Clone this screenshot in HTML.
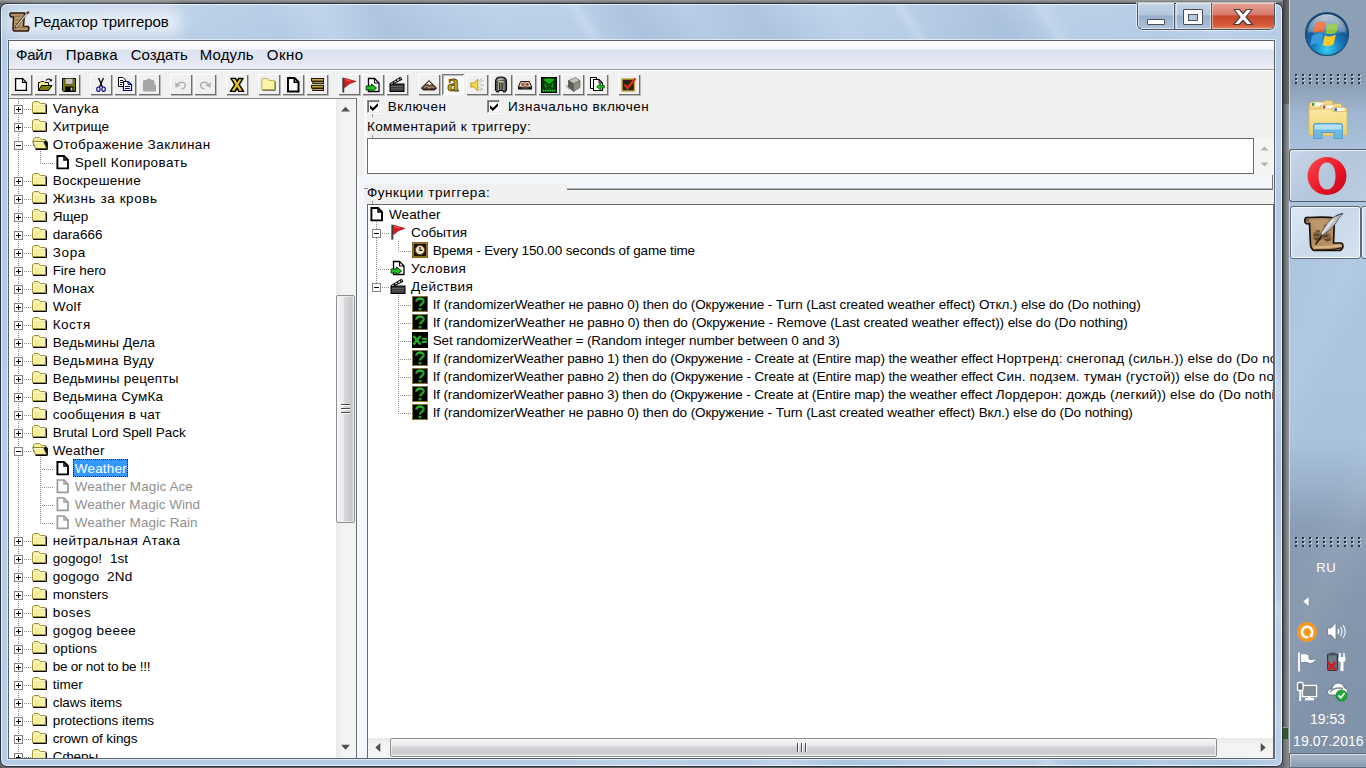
<!DOCTYPE html>
<html><head><meta charset="utf-8"><title>Редактор триггеров</title>
<style>
html,body{margin:0;padding:0}
body{width:1366px;height:768px;overflow:hidden;position:relative;background:#606468;font-family:"Liberation Sans",sans-serif}
div{box-sizing:border-box}
.a,.t,.ic,.hd,.vd,.box,.sel,.tb{position:absolute}
.t{white-space:pre;line-height:16px;height:16px}
.ic{line-height:0}
.ic svg,.tb svg{display:block}
.hd{height:1px;background:repeating-linear-gradient(90deg,#8c8c8c 0 1px,transparent 1px 2px)}
.vd{width:1px;background:repeating-linear-gradient(180deg,#8c8c8c 0 1px,transparent 1px 2px)}
.box{width:9px;height:9px;border:1px solid #848484;background:#fff}
.box:before{content:"";position:absolute;left:1px;top:3px;width:5px;height:1px;background:#000}
.box.plus:after{content:"";position:absolute;left:3px;top:1px;width:1px;height:5px;background:#000}
.sel{background:#3399ff;outline:1px dotted #1a1a1a;outline-offset:-1px}
.tb{top:74px;width:22px;height:21px;background:#f0f0f0;box-shadow:inset 1px 1px 0 #fff,inset -1px -1px 0 #6e6e6e,1px 1px 0 #b9b9b9}
.tb.dn{background:#f8f8f8;box-shadow:inset 1px 1px 0 #7e7e7e,inset -1px -1px 0 #fff,inset 2px 2px 0 #b8b8b8}
.tb svg{position:absolute;left:3px;top:2px}
</style></head>
<body>
<!-- top strip above window -->
<div class="a" style="left:0;top:0;width:1290px;height:4px;background:linear-gradient(#9a9da0,#5a5d60)"></div>
<!-- strip right of window (other windows behind) -->
<div class="a" style="left:1283px;top:0;width:7px;height:768px;background:linear-gradient(90deg,#46484c,#77797d 40%,#8a8c90 75%,#c8d4e2)"></div>
<div class="a" style="left:1283px;top:0;width:6px;height:104px;background:linear-gradient(90deg,#3c3e42,#5c5e62 50%,#66686c)"></div>

<div class="a" style="left:1283px;top:727px;width:5px;height:12px;background:#2c5a2c;border-top:1px solid #9a9a9a"></div>
<div class="a" style="left:1283px;top:739px;width:6px;height:29px;background:linear-gradient(90deg,#6a6a6a,#8e8e8e)"></div>
<!-- ================= TASKBAR ================= -->
<div id="taskbar" class="a" style="left:1289px;top:0;width:77px;height:768px;background:linear-gradient(115deg,rgba(255,255,255,0) 30%,rgba(255,255,255,.07) 42%,rgba(255,255,255,0) 50%,rgba(255,255,255,0) 62%,rgba(255,255,255,.06) 70%,rgba(255,255,255,0) 80%),linear-gradient(180deg,#8ea0b5 0,#8b9eb4 84px,#a0b6cf 112px,#a9c1db 150px,#adc6e0 260px,#a9c3de 440px,#9db3cc 480px,#8a9db4 525px,#8597ad 600px,#7f91a7 768px);border-left:1px solid #c9d6e4">
</div>

<!-- ================= WINDOW FRAME ================= -->
<div id="win" class="a" style="left:0;top:3px;width:1283px;height:764px;border-radius:7px;border:1px solid #27313e;background:linear-gradient(58deg,rgba(255,255,255,0) 0.0%,rgba(255,255,255,0) 30.0%,rgba(255,255,255,0.1) 36.0%,rgba(255,255,255,0) 42.0%,rgba(255,255,255,0.13) 44.7%,rgba(255,255,255,0) 46.5%,rgba(40,70,110,0.06) 48.1%,rgba(255,255,255,0) 52.0%,rgba(255,255,255,0.08) 54.9%,rgba(255,255,255,0.06) 59.0%,rgba(255,255,255,0.2) 59.7%,rgba(255,255,255,0) 60.3%,rgba(40,70,110,0.07) 62.5%,rgba(255,255,255,0) 66.0%,rgba(40,70,110,0.06) 69.7%,rgba(255,255,255,0) 72.0%,rgba(255,255,255,0.1) 74.2%,rgba(255,255,255,0.04) 77.6%,rgba(255,255,255,0.2) 78.2%,rgba(255,255,255,0) 78.8%,rgba(40,70,110,0.08) 83.3%,rgba(255,255,255,0) 85.5%,rgba(255,255,255,0.18) 86.1%,rgba(255,255,255,0.05) 87.0%,rgba(255,255,255,0) 92.0%,rgba(255,255,255,0.1) 95.0%,rgba(255,255,255,0) 100.0%),linear-gradient(180deg,#b9cfe7 0,#b3cae4 40px,#b6cce5 100%);box-shadow:inset 0 0 0 1px rgba(255,255,255,.75)"></div>
<!-- title glow -->
<div class="a" style="left:6px;top:9px;width:176px;height:26px;border-radius:13px;background:rgba(255,255,255,.62);filter:blur(7px)"></div>

<!-- client border -->
<div class="a" style="left:7px;top:39px;width:1269px;height:721px;border:1px solid rgba(255,255,255,.55)"></div>
<div id="client" class="a" style="left:8px;top:40px;width:1267px;height:719px;border:1px solid #586270;background:#f0f0f0"></div>

<!-- menu bar -->
<div class="a" style="left:9px;top:41px;width:1265px;height:28px;background:linear-gradient(180deg,#ffffff 0,#f7f8fc 8px,#dde2f0 9px,#dfe4f1 16px,#eceef7 28px)"></div>
<div class="a" style="left:9px;top:69px;width:1265px;height:1px;background:#a0a0a0"></div>
<div class="a" style="left:9px;top:70px;width:1265px;height:1px;background:#fff"></div>
<!-- toolbar bg is client bg (#f0f0f0) -->

<!-- ===== left tree box ===== -->
<div class="a" style="left:9px;top:98px;width:348px;height:660px;background:#fff;border-top:1px solid #828282;border-right:1px solid #6e6e6e"></div>
<!-- vertical splitter -->
<div class="a" style="left:357px;top:98px;width:10px;height:660px;background:#f4f7fb"></div>
<div class="a" style="left:357px;top:98px;width:7px;height:78px;background:#f0f0f0"></div>

<!-- ===== right pane ===== -->
<!-- checkboxes -->
<div class="a cb" style="left:367px;top:100px"></div>
<div class="a cb" style="left:487px;top:100px"></div>
<style>
.cb{width:13px;height:13px;background:#fff;border:1px solid #8a8a8a;border-right-color:#e8e8e8;border-bottom-color:#e8e8e8;box-shadow:inset 1px 1px 0 #6e6e6e,1px 1px 0 #fff}
.cb:after{content:"";position:absolute;left:2px;top:2px;width:8px;height:8px;background:#000;clip-path:polygon(0 28%,0 68%,36% 100%,100% 38%,100% 0%,36% 62%)}
</style>
<!-- tiny tick artefacts -->
<div class="a" style="left:372px;top:114px;width:1px;height:3px;background:#9a9a9a"></div>
<div class="a" style="left:372px;top:135px;width:1px;height:3px;background:#9a9a9a"></div>
<!-- comment box -->
<div class="a" style="left:367px;top:138px;width:887px;height:36px;background:#fff;border:1px solid #6c6c6c"></div>
<div class="a" style="left:1254px;top:138px;width:20px;height:36px;background:#f4f4f4"></div>
<svg class="a" style="left:1259px;top:144px" width="11" height="26" viewBox="0 0 11 26"><path d="M1.5 6.5L5.5 2.5L9.5 6.5Z" fill="#b4b4b4"/><path d="M1.5 18.5L5.5 22.5L9.5 18.5Z" fill="#b4b4b4"/></svg>
<!-- horizontal splitter strip -->
<div class="a" style="left:364px;top:175px;width:909px;height:15px;background:#f3f6fb;border-bottom:1px solid #666;border-right:1px solid #777"></div>
<div class="a" style="left:364px;top:190px;width:909px;height:1px;background:#fbfbfb"></div>
<div class="a" style="left:364px;top:188px;width:908px;height:1px;background:#b4b6ba"></div>
<!-- label bg -->
<div class="a" style="left:364px;top:184px;width:203px;height:20px;background:#f0f0f0"></div>
<div class="a" style="left:364px;top:188px;width:4px;height:1px;background:#8a8a8a"></div>
<div class="a" style="left:372px;top:201px;width:1px;height:3px;background:#9a9a9a"></div>
<!-- function tree box -->
<div class="a" style="left:367px;top:204px;width:907px;height:554px;background:#fff;border-top:1px solid #6a6a6a;border-left:1px solid #6a6a6a;border-right:1px solid #6a6a6a"></div>

<div id="tree" class="a" style="left:0;top:99px;width:336px;height:659px;overflow:hidden"><div class="a" style="left:0;top:-99px">
<div class="vd" style="left:18px;top:99px;height:660px"></div>
<div class="vd" style="left:40px;top:151px;height:13px"></div>
<div class="vd" style="left:40px;top:457px;height:67px"></div>
<div class="hd" style="left:24px;top:109px;width:8px"></div>
<div class="box plus" style="left:14px;top:105px"></div>
<div class="ic" style="left:32px;top:100px"><svg width="16" height="15" viewBox="0 0 16 15" ><path d="M0.5 12.5V3L2 1.5H6.5L8.5 3.5H13.5V12.5Z" fill="#f4ec96" stroke="#9a9440"/><path d="M1.5 4.5H12.5M1.5 4.5V11.5" stroke="#fffbd2" fill="none"/><path d="M7 8l5 -3v7h-6z" fill="#fbf6c0" opacity=".6"/><path d="M1 13.5H14.5V4.5" fill="none" stroke="#000"/><path d="M14.5 5V13" stroke="#000"/></svg></div>
<div class="t" style="left:52.7px;top:101px;font-size:13.5px;letter-spacing:0.395px;color:#000;">Vanyka</div>
<div class="hd" style="left:24px;top:127px;width:8px"></div>
<div class="box plus" style="left:14px;top:123px"></div>
<div class="ic" style="left:32px;top:118px"><svg width="16" height="15" viewBox="0 0 16 15" ><path d="M0.5 12.5V3L2 1.5H6.5L8.5 3.5H13.5V12.5Z" fill="#f4ec96" stroke="#9a9440"/><path d="M1.5 4.5H12.5M1.5 4.5V11.5" stroke="#fffbd2" fill="none"/><path d="M7 8l5 -3v7h-6z" fill="#fbf6c0" opacity=".6"/><path d="M1 13.5H14.5V4.5" fill="none" stroke="#000"/><path d="M14.5 5V13" stroke="#000"/></svg></div>
<div class="t" style="left:52.7px;top:119px;font-size:13.5px;letter-spacing:0.021px;color:#000;">Хитрище</div>
<div class="hd" style="left:24px;top:145px;width:8px"></div>
<div class="box minus" style="left:14px;top:141px"></div>
<div class="ic" style="left:32px;top:136px"><svg width="17" height="15" viewBox="0 0 17 15" ><path d="M1.5 10V3L3 1.5H7.5L9.5 3.5H13.5V6" fill="#f4ec96" stroke="#9a9440"/><path d="M0.5 5.5H11.5L14.5 12.5H3.5Z" fill="#f6ef9e" stroke="#8a8436"/><path d="M1.8 6.5H11" stroke="#fffbd2"/><path d="M12 5.5L15.5 13V6.5L14 4.5" fill="#000" stroke="#000" stroke-width=".8"/><path d="M3.5 13.3H15.5" stroke="#000" stroke-width="1.4"/></svg></div>
<div class="t" style="left:52.7px;top:137px;font-size:13.5px;letter-spacing:0.443px;color:#000;">Отображение Заклинан</div>
<div class="hd" style="left:42px;top:163px;width:12px"></div>
<div class="ic" style="left:56px;top:155px"><svg width="14" height="16" viewBox="0 0 14 16" ><path d="M1.4 1H8L12 5V13.4H1.4Z" fill="#fff" stroke="#000" stroke-width="1.9" stroke-linejoin="miter"/><path d="M8 1V5H12" fill="none" stroke="#000" stroke-width="1.5"/></svg></div>
<div class="t" style="left:74.7px;top:155px;font-size:13.5px;letter-spacing:0.402px;color:#000;">Spell Копировать</div>
<div class="hd" style="left:24px;top:181px;width:8px"></div>
<div class="box plus" style="left:14px;top:177px"></div>
<div class="ic" style="left:32px;top:172px"><svg width="16" height="15" viewBox="0 0 16 15" ><path d="M0.5 12.5V3L2 1.5H6.5L8.5 3.5H13.5V12.5Z" fill="#f4ec96" stroke="#9a9440"/><path d="M1.5 4.5H12.5M1.5 4.5V11.5" stroke="#fffbd2" fill="none"/><path d="M7 8l5 -3v7h-6z" fill="#fbf6c0" opacity=".6"/><path d="M1 13.5H14.5V4.5" fill="none" stroke="#000"/><path d="M14.5 5V13" stroke="#000"/></svg></div>
<div class="t" style="left:52.7px;top:173px;font-size:13.5px;letter-spacing:0.297px;color:#000;">Воскрешение</div>
<div class="hd" style="left:24px;top:199px;width:8px"></div>
<div class="box plus" style="left:14px;top:195px"></div>
<div class="ic" style="left:32px;top:190px"><svg width="16" height="15" viewBox="0 0 16 15" ><path d="M0.5 12.5V3L2 1.5H6.5L8.5 3.5H13.5V12.5Z" fill="#f4ec96" stroke="#9a9440"/><path d="M1.5 4.5H12.5M1.5 4.5V11.5" stroke="#fffbd2" fill="none"/><path d="M7 8l5 -3v7h-6z" fill="#fbf6c0" opacity=".6"/><path d="M1 13.5H14.5V4.5" fill="none" stroke="#000"/><path d="M14.5 5V13" stroke="#000"/></svg></div>
<div class="t" style="left:52.7px;top:191px;font-size:13.5px;letter-spacing:0.563px;color:#000;">Жизнь за кровь</div>
<div class="hd" style="left:24px;top:217px;width:8px"></div>
<div class="box plus" style="left:14px;top:213px"></div>
<div class="ic" style="left:32px;top:208px"><svg width="16" height="15" viewBox="0 0 16 15" ><path d="M0.5 12.5V3L2 1.5H6.5L8.5 3.5H13.5V12.5Z" fill="#f4ec96" stroke="#9a9440"/><path d="M1.5 4.5H12.5M1.5 4.5V11.5" stroke="#fffbd2" fill="none"/><path d="M7 8l5 -3v7h-6z" fill="#fbf6c0" opacity=".6"/><path d="M1 13.5H14.5V4.5" fill="none" stroke="#000"/><path d="M14.5 5V13" stroke="#000"/></svg></div>
<div class="t" style="left:52.7px;top:209px;font-size:13.5px;letter-spacing:-0.059px;color:#000;">Ящер</div>
<div class="hd" style="left:24px;top:235px;width:8px"></div>
<div class="box plus" style="left:14px;top:231px"></div>
<div class="ic" style="left:32px;top:226px"><svg width="16" height="15" viewBox="0 0 16 15" ><path d="M0.5 12.5V3L2 1.5H6.5L8.5 3.5H13.5V12.5Z" fill="#f4ec96" stroke="#9a9440"/><path d="M1.5 4.5H12.5M1.5 4.5V11.5" stroke="#fffbd2" fill="none"/><path d="M7 8l5 -3v7h-6z" fill="#fbf6c0" opacity=".6"/><path d="M1 13.5H14.5V4.5" fill="none" stroke="#000"/><path d="M14.5 5V13" stroke="#000"/></svg></div>
<div class="t" style="left:52.7px;top:227px;font-size:13.5px;letter-spacing:0.050px;color:#000;">dara666</div>
<div class="hd" style="left:24px;top:253px;width:8px"></div>
<div class="box plus" style="left:14px;top:249px"></div>
<div class="ic" style="left:32px;top:244px"><svg width="16" height="15" viewBox="0 0 16 15" ><path d="M0.5 12.5V3L2 1.5H6.5L8.5 3.5H13.5V12.5Z" fill="#f4ec96" stroke="#9a9440"/><path d="M1.5 4.5H12.5M1.5 4.5V11.5" stroke="#fffbd2" fill="none"/><path d="M7 8l5 -3v7h-6z" fill="#fbf6c0" opacity=".6"/><path d="M1 13.5H14.5V4.5" fill="none" stroke="#000"/><path d="M14.5 5V13" stroke="#000"/></svg></div>
<div class="t" style="left:52.7px;top:245px;font-size:13.5px;letter-spacing:0.653px;color:#000;">Зора</div>
<div class="hd" style="left:24px;top:271px;width:8px"></div>
<div class="box plus" style="left:14px;top:267px"></div>
<div class="ic" style="left:32px;top:262px"><svg width="16" height="15" viewBox="0 0 16 15" ><path d="M0.5 12.5V3L2 1.5H6.5L8.5 3.5H13.5V12.5Z" fill="#f4ec96" stroke="#9a9440"/><path d="M1.5 4.5H12.5M1.5 4.5V11.5" stroke="#fffbd2" fill="none"/><path d="M7 8l5 -3v7h-6z" fill="#fbf6c0" opacity=".6"/><path d="M1 13.5H14.5V4.5" fill="none" stroke="#000"/><path d="M14.5 5V13" stroke="#000"/></svg></div>
<div class="t" style="left:52.7px;top:263px;font-size:13.5px;letter-spacing:-0.081px;color:#000;">Fire hero</div>
<div class="hd" style="left:24px;top:289px;width:8px"></div>
<div class="box plus" style="left:14px;top:285px"></div>
<div class="ic" style="left:32px;top:280px"><svg width="16" height="15" viewBox="0 0 16 15" ><path d="M0.5 12.5V3L2 1.5H6.5L8.5 3.5H13.5V12.5Z" fill="#f4ec96" stroke="#9a9440"/><path d="M1.5 4.5H12.5M1.5 4.5V11.5" stroke="#fffbd2" fill="none"/><path d="M7 8l5 -3v7h-6z" fill="#fbf6c0" opacity=".6"/><path d="M1 13.5H14.5V4.5" fill="none" stroke="#000"/><path d="M14.5 5V13" stroke="#000"/></svg></div>
<div class="t" style="left:52.7px;top:281px;font-size:13.5px;letter-spacing:0.225px;color:#000;">Монах</div>
<div class="hd" style="left:24px;top:307px;width:8px"></div>
<div class="box plus" style="left:14px;top:303px"></div>
<div class="ic" style="left:32px;top:298px"><svg width="16" height="15" viewBox="0 0 16 15" ><path d="M0.5 12.5V3L2 1.5H6.5L8.5 3.5H13.5V12.5Z" fill="#f4ec96" stroke="#9a9440"/><path d="M1.5 4.5H12.5M1.5 4.5V11.5" stroke="#fffbd2" fill="none"/><path d="M7 8l5 -3v7h-6z" fill="#fbf6c0" opacity=".6"/><path d="M1 13.5H14.5V4.5" fill="none" stroke="#000"/><path d="M14.5 5V13" stroke="#000"/></svg></div>
<div class="t" style="left:52.7px;top:299px;font-size:13.5px;letter-spacing:0.459px;color:#000;">Wolf</div>
<div class="hd" style="left:24px;top:325px;width:8px"></div>
<div class="box plus" style="left:14px;top:321px"></div>
<div class="ic" style="left:32px;top:316px"><svg width="16" height="15" viewBox="0 0 16 15" ><path d="M0.5 12.5V3L2 1.5H6.5L8.5 3.5H13.5V12.5Z" fill="#f4ec96" stroke="#9a9440"/><path d="M1.5 4.5H12.5M1.5 4.5V11.5" stroke="#fffbd2" fill="none"/><path d="M7 8l5 -3v7h-6z" fill="#fbf6c0" opacity=".6"/><path d="M1 13.5H14.5V4.5" fill="none" stroke="#000"/><path d="M14.5 5V13" stroke="#000"/></svg></div>
<div class="t" style="left:52.7px;top:317px;font-size:13.5px;letter-spacing:0.475px;color:#000;">Костя</div>
<div class="hd" style="left:24px;top:343px;width:8px"></div>
<div class="box plus" style="left:14px;top:339px"></div>
<div class="ic" style="left:32px;top:334px"><svg width="16" height="15" viewBox="0 0 16 15" ><path d="M0.5 12.5V3L2 1.5H6.5L8.5 3.5H13.5V12.5Z" fill="#f4ec96" stroke="#9a9440"/><path d="M1.5 4.5H12.5M1.5 4.5V11.5" stroke="#fffbd2" fill="none"/><path d="M7 8l5 -3v7h-6z" fill="#fbf6c0" opacity=".6"/><path d="M1 13.5H14.5V4.5" fill="none" stroke="#000"/><path d="M14.5 5V13" stroke="#000"/></svg></div>
<div class="t" style="left:52.7px;top:335px;font-size:13.5px;letter-spacing:0.150px;color:#000;">Ведьмины Дела</div>
<div class="hd" style="left:24px;top:361px;width:8px"></div>
<div class="box plus" style="left:14px;top:357px"></div>
<div class="ic" style="left:32px;top:352px"><svg width="16" height="15" viewBox="0 0 16 15" ><path d="M0.5 12.5V3L2 1.5H6.5L8.5 3.5H13.5V12.5Z" fill="#f4ec96" stroke="#9a9440"/><path d="M1.5 4.5H12.5M1.5 4.5V11.5" stroke="#fffbd2" fill="none"/><path d="M7 8l5 -3v7h-6z" fill="#fbf6c0" opacity=".6"/><path d="M1 13.5H14.5V4.5" fill="none" stroke="#000"/><path d="M14.5 5V13" stroke="#000"/></svg></div>
<div class="t" style="left:52.7px;top:353px;font-size:13.5px;letter-spacing:0.407px;color:#000;">Ведьмина Вуду</div>
<div class="hd" style="left:24px;top:379px;width:8px"></div>
<div class="box plus" style="left:14px;top:375px"></div>
<div class="ic" style="left:32px;top:370px"><svg width="16" height="15" viewBox="0 0 16 15" ><path d="M0.5 12.5V3L2 1.5H6.5L8.5 3.5H13.5V12.5Z" fill="#f4ec96" stroke="#9a9440"/><path d="M1.5 4.5H12.5M1.5 4.5V11.5" stroke="#fffbd2" fill="none"/><path d="M7 8l5 -3v7h-6z" fill="#fbf6c0" opacity=".6"/><path d="M1 13.5H14.5V4.5" fill="none" stroke="#000"/><path d="M14.5 5V13" stroke="#000"/></svg></div>
<div class="t" style="left:52.7px;top:371px;font-size:13.5px;letter-spacing:0.239px;color:#000;">Ведьмины рецепты</div>
<div class="hd" style="left:24px;top:397px;width:8px"></div>
<div class="box plus" style="left:14px;top:393px"></div>
<div class="ic" style="left:32px;top:388px"><svg width="16" height="15" viewBox="0 0 16 15" ><path d="M0.5 12.5V3L2 1.5H6.5L8.5 3.5H13.5V12.5Z" fill="#f4ec96" stroke="#9a9440"/><path d="M1.5 4.5H12.5M1.5 4.5V11.5" stroke="#fffbd2" fill="none"/><path d="M7 8l5 -3v7h-6z" fill="#fbf6c0" opacity=".6"/><path d="M1 13.5H14.5V4.5" fill="none" stroke="#000"/><path d="M14.5 5V13" stroke="#000"/></svg></div>
<div class="t" style="left:52.7px;top:389px;font-size:13.5px;letter-spacing:0.202px;color:#000;">Ведьмина СумКа</div>
<div class="hd" style="left:24px;top:415px;width:8px"></div>
<div class="box plus" style="left:14px;top:411px"></div>
<div class="ic" style="left:32px;top:406px"><svg width="16" height="15" viewBox="0 0 16 15" ><path d="M0.5 12.5V3L2 1.5H6.5L8.5 3.5H13.5V12.5Z" fill="#f4ec96" stroke="#9a9440"/><path d="M1.5 4.5H12.5M1.5 4.5V11.5" stroke="#fffbd2" fill="none"/><path d="M7 8l5 -3v7h-6z" fill="#fbf6c0" opacity=".6"/><path d="M1 13.5H14.5V4.5" fill="none" stroke="#000"/><path d="M14.5 5V13" stroke="#000"/></svg></div>
<div class="t" style="left:52.7px;top:407px;font-size:13.5px;letter-spacing:0.185px;color:#000;">сообщения в чат</div>
<div class="hd" style="left:24px;top:433px;width:8px"></div>
<div class="box plus" style="left:14px;top:429px"></div>
<div class="ic" style="left:32px;top:424px"><svg width="16" height="15" viewBox="0 0 16 15" ><path d="M0.5 12.5V3L2 1.5H6.5L8.5 3.5H13.5V12.5Z" fill="#f4ec96" stroke="#9a9440"/><path d="M1.5 4.5H12.5M1.5 4.5V11.5" stroke="#fffbd2" fill="none"/><path d="M7 8l5 -3v7h-6z" fill="#fbf6c0" opacity=".6"/><path d="M1 13.5H14.5V4.5" fill="none" stroke="#000"/><path d="M14.5 5V13" stroke="#000"/></svg></div>
<div class="t" style="left:52.7px;top:425px;font-size:13.5px;letter-spacing:-0.026px;color:#000;">Brutal Lord Spell Pack</div>
<div class="hd" style="left:24px;top:451px;width:8px"></div>
<div class="box minus" style="left:14px;top:447px"></div>
<div class="ic" style="left:32px;top:442px"><svg width="17" height="15" viewBox="0 0 17 15" ><path d="M1.5 10V3L3 1.5H7.5L9.5 3.5H13.5V6" fill="#f4ec96" stroke="#9a9440"/><path d="M0.5 5.5H11.5L14.5 12.5H3.5Z" fill="#f6ef9e" stroke="#8a8436"/><path d="M1.8 6.5H11" stroke="#fffbd2"/><path d="M12 5.5L15.5 13V6.5L14 4.5" fill="#000" stroke="#000" stroke-width=".8"/><path d="M3.5 13.3H15.5" stroke="#000" stroke-width="1.4"/></svg></div>
<div class="t" style="left:52.7px;top:443px;font-size:13.5px;letter-spacing:0.174px;color:#000;">Weather</div>
<div class="hd" style="left:42px;top:469px;width:12px"></div>
<div class="ic" style="left:56px;top:461px"><svg width="14" height="16" viewBox="0 0 14 16" ><path d="M1.4 1H8L12 5V13.4H1.4Z" fill="#fff" stroke="#000" stroke-width="1.9" stroke-linejoin="miter"/><path d="M8 1V5H12" fill="none" stroke="#000" stroke-width="1.5"/></svg></div>
<div class="sel" style="left:73px;top:459px;width:55px;height:18px"></div>
<div class="t" style="left:74.7px;top:461px;font-size:13.5px;letter-spacing:0.217px;color:#fff;">Weather</div>
<div class="hd" style="left:42px;top:487px;width:12px"></div>
<div class="ic" style="left:56px;top:479px"><svg width="14" height="16" viewBox="0 0 14 16" ><path d="M1.4 1H8L12 5V13.4H1.4Z" fill="#fff" stroke="#9a9a9a" stroke-width="1.7" stroke-linejoin="miter"/><path d="M8 1V5H12" fill="none" stroke="#9a9a9a" stroke-width="1.4"/></svg></div>
<div class="t" style="left:74.7px;top:479px;font-size:13.5px;letter-spacing:0.082px;color:#909090;">Weather Magic Ace</div>
<div class="hd" style="left:42px;top:505px;width:12px"></div>
<div class="ic" style="left:56px;top:497px"><svg width="14" height="16" viewBox="0 0 14 16" ><path d="M1.4 1H8L12 5V13.4H1.4Z" fill="#fff" stroke="#9a9a9a" stroke-width="1.7" stroke-linejoin="miter"/><path d="M8 1V5H12" fill="none" stroke="#9a9a9a" stroke-width="1.4"/></svg></div>
<div class="t" style="left:74.7px;top:497px;font-size:13.5px;letter-spacing:0.020px;color:#909090;">Weather Magic Wind</div>
<div class="hd" style="left:42px;top:523px;width:12px"></div>
<div class="ic" style="left:56px;top:515px"><svg width="14" height="16" viewBox="0 0 14 16" ><path d="M1.4 1H8L12 5V13.4H1.4Z" fill="#fff" stroke="#9a9a9a" stroke-width="1.7" stroke-linejoin="miter"/><path d="M8 1V5H12" fill="none" stroke="#9a9a9a" stroke-width="1.4"/></svg></div>
<div class="t" style="left:74.7px;top:515px;font-size:13.5px;letter-spacing:0.047px;color:#909090;">Weather Magic Rain</div>
<div class="hd" style="left:24px;top:541px;width:8px"></div>
<div class="box plus" style="left:14px;top:537px"></div>
<div class="ic" style="left:32px;top:532px"><svg width="16" height="15" viewBox="0 0 16 15" ><path d="M0.5 12.5V3L2 1.5H6.5L8.5 3.5H13.5V12.5Z" fill="#f4ec96" stroke="#9a9440"/><path d="M1.5 4.5H12.5M1.5 4.5V11.5" stroke="#fffbd2" fill="none"/><path d="M7 8l5 -3v7h-6z" fill="#fbf6c0" opacity=".6"/><path d="M1 13.5H14.5V4.5" fill="none" stroke="#000"/><path d="M14.5 5V13" stroke="#000"/></svg></div>
<div class="t" style="left:52.7px;top:533px;font-size:13.5px;letter-spacing:0.417px;color:#000;">нейтральная Атака</div>
<div class="hd" style="left:24px;top:559px;width:8px"></div>
<div class="box plus" style="left:14px;top:555px"></div>
<div class="ic" style="left:32px;top:550px"><svg width="16" height="15" viewBox="0 0 16 15" ><path d="M0.5 12.5V3L2 1.5H6.5L8.5 3.5H13.5V12.5Z" fill="#f4ec96" stroke="#9a9440"/><path d="M1.5 4.5H12.5M1.5 4.5V11.5" stroke="#fffbd2" fill="none"/><path d="M7 8l5 -3v7h-6z" fill="#fbf6c0" opacity=".6"/><path d="M1 13.5H14.5V4.5" fill="none" stroke="#000"/><path d="M14.5 5V13" stroke="#000"/></svg></div>
<div class="t" style="left:52.7px;top:551px;font-size:13.5px;letter-spacing:0.099px;color:#000;">gogogo!  1st</div>
<div class="hd" style="left:24px;top:577px;width:8px"></div>
<div class="box plus" style="left:14px;top:573px"></div>
<div class="ic" style="left:32px;top:568px"><svg width="16" height="15" viewBox="0 0 16 15" ><path d="M0.5 12.5V3L2 1.5H6.5L8.5 3.5H13.5V12.5Z" fill="#f4ec96" stroke="#9a9440"/><path d="M1.5 4.5H12.5M1.5 4.5V11.5" stroke="#fffbd2" fill="none"/><path d="M7 8l5 -3v7h-6z" fill="#fbf6c0" opacity=".6"/><path d="M1 13.5H14.5V4.5" fill="none" stroke="#000"/><path d="M14.5 5V13" stroke="#000"/></svg></div>
<div class="t" style="left:52.7px;top:569px;font-size:13.5px;letter-spacing:0.234px;color:#000;">gogogo  2Nd</div>
<div class="hd" style="left:24px;top:595px;width:8px"></div>
<div class="box plus" style="left:14px;top:591px"></div>
<div class="ic" style="left:32px;top:586px"><svg width="16" height="15" viewBox="0 0 16 15" ><path d="M0.5 12.5V3L2 1.5H6.5L8.5 3.5H13.5V12.5Z" fill="#f4ec96" stroke="#9a9440"/><path d="M1.5 4.5H12.5M1.5 4.5V11.5" stroke="#fffbd2" fill="none"/><path d="M7 8l5 -3v7h-6z" fill="#fbf6c0" opacity=".6"/><path d="M1 13.5H14.5V4.5" fill="none" stroke="#000"/><path d="M14.5 5V13" stroke="#000"/></svg></div>
<div class="t" style="left:52.7px;top:587px;font-size:13.5px;letter-spacing:-0.004px;color:#000;">monsters</div>
<div class="hd" style="left:24px;top:613px;width:8px"></div>
<div class="box plus" style="left:14px;top:609px"></div>
<div class="ic" style="left:32px;top:604px"><svg width="16" height="15" viewBox="0 0 16 15" ><path d="M0.5 12.5V3L2 1.5H6.5L8.5 3.5H13.5V12.5Z" fill="#f4ec96" stroke="#9a9440"/><path d="M1.5 4.5H12.5M1.5 4.5V11.5" stroke="#fffbd2" fill="none"/><path d="M7 8l5 -3v7h-6z" fill="#fbf6c0" opacity=".6"/><path d="M1 13.5H14.5V4.5" fill="none" stroke="#000"/><path d="M14.5 5V13" stroke="#000"/></svg></div>
<div class="t" style="left:52.7px;top:605px;font-size:13.5px;letter-spacing:0.514px;color:#000;">boses</div>
<div class="hd" style="left:24px;top:631px;width:8px"></div>
<div class="box plus" style="left:14px;top:627px"></div>
<div class="ic" style="left:32px;top:622px"><svg width="16" height="15" viewBox="0 0 16 15" ><path d="M0.5 12.5V3L2 1.5H6.5L8.5 3.5H13.5V12.5Z" fill="#f4ec96" stroke="#9a9440"/><path d="M1.5 4.5H12.5M1.5 4.5V11.5" stroke="#fffbd2" fill="none"/><path d="M7 8l5 -3v7h-6z" fill="#fbf6c0" opacity=".6"/><path d="M1 13.5H14.5V4.5" fill="none" stroke="#000"/><path d="M14.5 5V13" stroke="#000"/></svg></div>
<div class="t" style="left:52.7px;top:623px;font-size:13.5px;letter-spacing:0.432px;color:#000;">gogog beeee</div>
<div class="hd" style="left:24px;top:649px;width:8px"></div>
<div class="box plus" style="left:14px;top:645px"></div>
<div class="ic" style="left:32px;top:640px"><svg width="16" height="15" viewBox="0 0 16 15" ><path d="M0.5 12.5V3L2 1.5H6.5L8.5 3.5H13.5V12.5Z" fill="#f4ec96" stroke="#9a9440"/><path d="M1.5 4.5H12.5M1.5 4.5V11.5" stroke="#fffbd2" fill="none"/><path d="M7 8l5 -3v7h-6z" fill="#fbf6c0" opacity=".6"/><path d="M1 13.5H14.5V4.5" fill="none" stroke="#000"/><path d="M14.5 5V13" stroke="#000"/></svg></div>
<div class="t" style="left:52.7px;top:641px;font-size:13.5px;letter-spacing:0.150px;color:#000;">options</div>
<div class="hd" style="left:24px;top:667px;width:8px"></div>
<div class="box plus" style="left:14px;top:663px"></div>
<div class="ic" style="left:32px;top:658px"><svg width="16" height="15" viewBox="0 0 16 15" ><path d="M0.5 12.5V3L2 1.5H6.5L8.5 3.5H13.5V12.5Z" fill="#f4ec96" stroke="#9a9440"/><path d="M1.5 4.5H12.5M1.5 4.5V11.5" stroke="#fffbd2" fill="none"/><path d="M7 8l5 -3v7h-6z" fill="#fbf6c0" opacity=".6"/><path d="M1 13.5H14.5V4.5" fill="none" stroke="#000"/><path d="M14.5 5V13" stroke="#000"/></svg></div>
<div class="t" style="left:52.7px;top:659px;font-size:13.5px;letter-spacing:-0.230px;color:#000;">be or not to be !!!</div>
<div class="hd" style="left:24px;top:685px;width:8px"></div>
<div class="box plus" style="left:14px;top:681px"></div>
<div class="ic" style="left:32px;top:676px"><svg width="16" height="15" viewBox="0 0 16 15" ><path d="M0.5 12.5V3L2 1.5H6.5L8.5 3.5H13.5V12.5Z" fill="#f4ec96" stroke="#9a9440"/><path d="M1.5 4.5H12.5M1.5 4.5V11.5" stroke="#fffbd2" fill="none"/><path d="M7 8l5 -3v7h-6z" fill="#fbf6c0" opacity=".6"/><path d="M1 13.5H14.5V4.5" fill="none" stroke="#000"/><path d="M14.5 5V13" stroke="#000"/></svg></div>
<div class="t" style="left:52.7px;top:677px;font-size:13.5px;letter-spacing:0.040px;color:#000;">timer</div>
<div class="hd" style="left:24px;top:703px;width:8px"></div>
<div class="box plus" style="left:14px;top:699px"></div>
<div class="ic" style="left:32px;top:694px"><svg width="16" height="15" viewBox="0 0 16 15" ><path d="M0.5 12.5V3L2 1.5H6.5L8.5 3.5H13.5V12.5Z" fill="#f4ec96" stroke="#9a9440"/><path d="M1.5 4.5H12.5M1.5 4.5V11.5" stroke="#fffbd2" fill="none"/><path d="M7 8l5 -3v7h-6z" fill="#fbf6c0" opacity=".6"/><path d="M1 13.5H14.5V4.5" fill="none" stroke="#000"/><path d="M14.5 5V13" stroke="#000"/></svg></div>
<div class="t" style="left:52.7px;top:695px;font-size:13.5px;letter-spacing:-0.047px;color:#000;">claws items</div>
<div class="hd" style="left:24px;top:721px;width:8px"></div>
<div class="box plus" style="left:14px;top:717px"></div>
<div class="ic" style="left:32px;top:712px"><svg width="16" height="15" viewBox="0 0 16 15" ><path d="M0.5 12.5V3L2 1.5H6.5L8.5 3.5H13.5V12.5Z" fill="#f4ec96" stroke="#9a9440"/><path d="M1.5 4.5H12.5M1.5 4.5V11.5" stroke="#fffbd2" fill="none"/><path d="M7 8l5 -3v7h-6z" fill="#fbf6c0" opacity=".6"/><path d="M1 13.5H14.5V4.5" fill="none" stroke="#000"/><path d="M14.5 5V13" stroke="#000"/></svg></div>
<div class="t" style="left:52.7px;top:713px;font-size:13.5px;letter-spacing:-0.038px;color:#000;">protections items</div>
<div class="hd" style="left:24px;top:739px;width:8px"></div>
<div class="box plus" style="left:14px;top:735px"></div>
<div class="ic" style="left:32px;top:730px"><svg width="16" height="15" viewBox="0 0 16 15" ><path d="M0.5 12.5V3L2 1.5H6.5L8.5 3.5H13.5V12.5Z" fill="#f4ec96" stroke="#9a9440"/><path d="M1.5 4.5H12.5M1.5 4.5V11.5" stroke="#fffbd2" fill="none"/><path d="M7 8l5 -3v7h-6z" fill="#fbf6c0" opacity=".6"/><path d="M1 13.5H14.5V4.5" fill="none" stroke="#000"/><path d="M14.5 5V13" stroke="#000"/></svg></div>
<div class="t" style="left:52.7px;top:731px;font-size:13.5px;letter-spacing:-0.121px;color:#000;">crown of kings</div>
<div class="hd" style="left:24px;top:757px;width:8px"></div>
<div class="box plus" style="left:14px;top:753px"></div>
<div class="ic" style="left:32px;top:748px"><svg width="16" height="15" viewBox="0 0 16 15" ><path d="M0.5 12.5V3L2 1.5H6.5L8.5 3.5H13.5V12.5Z" fill="#f4ec96" stroke="#9a9440"/><path d="M1.5 4.5H12.5M1.5 4.5V11.5" stroke="#fffbd2" fill="none"/><path d="M7 8l5 -3v7h-6z" fill="#fbf6c0" opacity=".6"/><path d="M1 13.5H14.5V4.5" fill="none" stroke="#000"/><path d="M14.5 5V13" stroke="#000"/></svg></div>
<div class="t" style="left:52.7px;top:749px;font-size:13.5px;letter-spacing:-0.016px;color:#000;">Сферы</div>
</div></div>
<div id="func" class="a" style="left:368px;top:205px;width:905px;height:533px;overflow:hidden"><div class="a" style="left:-368px;top:-205px">
<div class="vd" style="left:376px;top:222px;height:65px"></div>
<div class="vd" style="left:398px;top:241px;height:11px"></div>
<div class="vd" style="left:398px;top:295px;height:119px"></div>
<div class="ic" style="left:370px;top:207px"><svg width="14" height="16" viewBox="0 0 14 16" ><path d="M1.4 1H8L12 5V13.4H1.4Z" fill="#fff" stroke="#000" stroke-width="1.9" stroke-linejoin="miter"/><path d="M8 1V5H12" fill="none" stroke="#000" stroke-width="1.5"/></svg></div>
<div class="t" style="left:388.9px;top:207px;font-size:13.5px;letter-spacing:0.146px;color:#000;">Weather</div>
<div class="ic" style="left:390px;top:224px"><svg width="16" height="16" viewBox="0 0 16 16" ><path d="M2.2 0.8V15.6" stroke="#111" stroke-width="1.5"/><path d="M3.1 1V15.4" stroke="#8e8e8e" stroke-width=".7"/><path d="M3.5 1.3L14.8 4.4L8.6 6.6L3.5 10.6Z" fill="#e4161a" stroke="#8a0a0a" stroke-width=".7"/><path d="M4 2.6L10 4.2" stroke="#ff6e6e" stroke-width=".8"/></svg></div>
<div class="t" style="left:411.1px;top:225px;font-size:13.5px;letter-spacing:0.038px;color:#000;">События</div>
<div class="box minus" style="left:372px;top:229px"></div>
<div class="hd" style="left:382px;top:233px;width:8px"></div>
<div class="ic" style="left:412px;top:242px"><svg width="16" height="16" viewBox="0 0 16 16" ><rect x="0" y="0" width="16" height="16" fill="#1a1200"/><rect x="1" y="1" width="14" height="14" fill="none" stroke="#b8922c" stroke-width="1.4"/><circle cx="8" cy="8" r="4.6" fill="#e8e0c8" stroke="#6a5020" stroke-width="1"/><path d="M8 5V8.3H10.5" stroke="#301800" stroke-width="1.2" fill="none"/></svg></div>
<div class="t" style="left:432.7px;top:243px;font-size:13.5px;letter-spacing:-0.139px;color:#000;">Время - Every 150.00 seconds of game time</div>
<div class="hd" style="left:400px;top:251px;width:12px"></div>
<div class="ic" style="left:390px;top:260px"><svg width="16" height="16" viewBox="0 0 16 16" ><path d="M3.5 1.5H9.5L14 6V14.5H3.5Z" fill="#fff" stroke="#000" stroke-width="1.3"/><path d="M9.5 1.5V6H14" fill="none" stroke="#000" stroke-width="1.1"/><path d="M1.2 9H6.6V7L11.6 11L6.6 15V13H1.2Z" fill="#22c322" stroke="#0a3a0a" stroke-width="1"/></svg></div>
<div class="t" style="left:411.1px;top:261px;font-size:13.5px;letter-spacing:0.474px;color:#000;">Условия</div>
<div class="hd" style="left:378px;top:269px;width:12px"></div>
<div class="ic" style="left:390px;top:278px"><svg width="16" height="16" viewBox="0 0 16 16" ><rect x="1" y="8" width="14" height="7.5" fill="#3a3a3a" stroke="#000" stroke-width="1"/><path d="M2 10.5H14M2 12.8H14" stroke="#666" stroke-width=".9"/><path d="M1 7.6L11.5 1.2L13 3.4L2.6 8.6Z" fill="#d8d8d8" stroke="#000" stroke-width="1"/><path d="M4 5.7l1.6 2M7 4l1.6 2M10 2.2l1.6 2" stroke="#000" stroke-width="1.2"/></svg></div>
<div class="t" style="left:411.1px;top:279px;font-size:13.5px;letter-spacing:0.368px;color:#000;">Действия</div>
<div class="box minus" style="left:372px;top:283px"></div>
<div class="hd" style="left:382px;top:287px;width:8px"></div>
<div class="ic" style="left:412px;top:296px"><svg width="16" height="16" viewBox="0 0 16 16" ><rect width="16" height="16" fill="#000"/><rect x=".5" y=".5" width="15" height="15" fill="none" stroke="#8a7428" stroke-width="1"/><path d="M4.4 5.8C4.2 1.4 11.8 1.4 11.6 5.2C11.5 7.6 8 8 8 10.6" fill="none" stroke="#1e9e1e" stroke-width="2.5"/><path d="M5 4.6C5.6 2.6 9 2.2 10.4 3.6" fill="none" stroke="#3ec83e" stroke-width="1"/><rect x="6.6" y="12" width="2.8" height="2.4" fill="#1e9e1e"/></svg></div>
<div class="t" style="left:432.7px;top:297px;font-size:13.5px;letter-spacing:-0.092px;color:#000;">If (randomizerWeather не равно 0) then do (Окружение - Turn (Last created weather effect) Откл.) else do (Do nothing)</div>
<div class="hd" style="left:400px;top:305px;width:12px"></div>
<div class="ic" style="left:412px;top:314px"><svg width="16" height="16" viewBox="0 0 16 16" ><rect width="16" height="16" fill="#000"/><rect x=".5" y=".5" width="15" height="15" fill="none" stroke="#8a7428" stroke-width="1"/><path d="M4.4 5.8C4.2 1.4 11.8 1.4 11.6 5.2C11.5 7.6 8 8 8 10.6" fill="none" stroke="#1e9e1e" stroke-width="2.5"/><path d="M5 4.6C5.6 2.6 9 2.2 10.4 3.6" fill="none" stroke="#3ec83e" stroke-width="1"/><rect x="6.6" y="12" width="2.8" height="2.4" fill="#1e9e1e"/></svg></div>
<div class="t" style="left:432.7px;top:315px;font-size:13.5px;letter-spacing:-0.076px;color:#000;">If (randomizerWeather не равно 0) then do (Окружение - Remove (Last created weather effect)) else do (Do nothing)</div>
<div class="hd" style="left:400px;top:323px;width:12px"></div>
<div class="ic" style="left:412px;top:332px"><svg width="16" height="16" viewBox="0 0 16 16" ><rect width="16" height="16" fill="#000"/><path d="M1.5 4L8.5 12.5M8.5 4L1.5 12.5" stroke="#22b022" stroke-width="2.4"/><path d="M9.8 6.8H15M9.8 10H15" stroke="#22b022" stroke-width="1.8"/></svg></div>
<div class="t" style="left:432.7px;top:333px;font-size:13.5px;letter-spacing:-0.142px;color:#000;">Set randomizerWeather = (Random integer number between 0 and 3)</div>
<div class="hd" style="left:400px;top:341px;width:12px"></div>
<div class="ic" style="left:412px;top:350px"><svg width="16" height="16" viewBox="0 0 16 16" ><rect width="16" height="16" fill="#000"/><rect x=".5" y=".5" width="15" height="15" fill="none" stroke="#8a7428" stroke-width="1"/><path d="M4.4 5.8C4.2 1.4 11.8 1.4 11.6 5.2C11.5 7.6 8 8 8 10.6" fill="none" stroke="#1e9e1e" stroke-width="2.5"/><path d="M5 4.6C5.6 2.6 9 2.2 10.4 3.6" fill="none" stroke="#3ec83e" stroke-width="1"/><rect x="6.6" y="12" width="2.8" height="2.4" fill="#1e9e1e"/></svg></div>
<div class="t" style="left:432.7px;top:351px;font-size:13.5px;letter-spacing:-0.147px;color:#000">If (randomizerWeather равно 1) then do (Окружение - Create at (Entire map) the weather effect </div>
<div class="t" style="left:996.5px;top:351px;font-size:13.5px;letter-spacing:0.157px;color:#000">Нортренд: снегопад (сильн.)) else do (Do nothing)</div>
<div class="hd" style="left:400px;top:359px;width:12px"></div>
<div class="ic" style="left:412px;top:368px"><svg width="16" height="16" viewBox="0 0 16 16" ><rect width="16" height="16" fill="#000"/><rect x=".5" y=".5" width="15" height="15" fill="none" stroke="#8a7428" stroke-width="1"/><path d="M4.4 5.8C4.2 1.4 11.8 1.4 11.6 5.2C11.5 7.6 8 8 8 10.6" fill="none" stroke="#1e9e1e" stroke-width="2.5"/><path d="M5 4.6C5.6 2.6 9 2.2 10.4 3.6" fill="none" stroke="#3ec83e" stroke-width="1"/><rect x="6.6" y="12" width="2.8" height="2.4" fill="#1e9e1e"/></svg></div>
<div class="t" style="left:432.7px;top:369px;font-size:13.5px;letter-spacing:-0.147px;color:#000">If (randomizerWeather равно 2) then do (Окружение - Create at (Entire map) the weather effect </div>
<div class="t" style="left:996.5px;top:369px;font-size:13.5px;letter-spacing:0.170px;color:#000">Син. подзем. туман (густой)) else do (Do nothing)</div>
<div class="hd" style="left:400px;top:377px;width:12px"></div>
<div class="ic" style="left:412px;top:386px"><svg width="16" height="16" viewBox="0 0 16 16" ><rect width="16" height="16" fill="#000"/><rect x=".5" y=".5" width="15" height="15" fill="none" stroke="#8a7428" stroke-width="1"/><path d="M4.4 5.8C4.2 1.4 11.8 1.4 11.6 5.2C11.5 7.6 8 8 8 10.6" fill="none" stroke="#1e9e1e" stroke-width="2.5"/><path d="M5 4.6C5.6 2.6 9 2.2 10.4 3.6" fill="none" stroke="#3ec83e" stroke-width="1"/><rect x="6.6" y="12" width="2.8" height="2.4" fill="#1e9e1e"/></svg></div>
<div class="t" style="left:432.7px;top:387px;font-size:13.5px;letter-spacing:-0.154px;color:#000">If (randomizerWeather равно 3) then do (Окружение - Create at (Entire map) the weather effect </div>
<div class="t" style="left:995.8px;top:387px;font-size:13.5px;letter-spacing:0.151px;color:#000">Лордерон: дождь (легкий)) else do (Do nothing)</div>
<div class="hd" style="left:400px;top:395px;width:12px"></div>
<div class="ic" style="left:412px;top:404px"><svg width="16" height="16" viewBox="0 0 16 16" ><rect width="16" height="16" fill="#000"/><rect x=".5" y=".5" width="15" height="15" fill="none" stroke="#8a7428" stroke-width="1"/><path d="M4.4 5.8C4.2 1.4 11.8 1.4 11.6 5.2C11.5 7.6 8 8 8 10.6" fill="none" stroke="#1e9e1e" stroke-width="2.5"/><path d="M5 4.6C5.6 2.6 9 2.2 10.4 3.6" fill="none" stroke="#3ec83e" stroke-width="1"/><rect x="6.6" y="12" width="2.8" height="2.4" fill="#1e9e1e"/></svg></div>
<div class="t" style="left:432.7px;top:405px;font-size:13.5px;letter-spacing:-0.095px;color:#000;">If (randomizerWeather не равно 0) then do (Окружение - Turn (Last created weather effect) Вкл.) else do (Do nothing)</div>
<div class="hd" style="left:400px;top:413px;width:12px"></div>
</div></div>
<div class="t" style="left:33.8px;top:14px;font-size:15px;letter-spacing:-0.058px;color:#000;">Редактор триггеров</div>
<div class="t" style="left:16.0px;top:47px;font-size:15px;letter-spacing:-0.248px;color:#000;">Файл</div>
<div class="t" style="left:65.8px;top:47px;font-size:15px;letter-spacing:0.205px;color:#000;">Правка</div>
<div class="t" style="left:130.8px;top:47px;font-size:15px;letter-spacing:-0.017px;color:#000;">Создать</div>
<div class="t" style="left:199.8px;top:47px;font-size:15px;letter-spacing:0.121px;color:#000;">Модуль</div>
<div class="t" style="left:266.8px;top:47px;font-size:15px;letter-spacing:0.510px;color:#000;">Окно</div>
<div class="t" style="left:387.8px;top:99px;font-size:13.5px;letter-spacing:0.562px;color:#000;">Включен</div>
<div class="t" style="left:508.0px;top:99px;font-size:13.5px;letter-spacing:0.535px;color:#000;">Изначально включен</div>
<div class="t" style="left:366.9px;top:119px;font-size:13.5px;letter-spacing:0.418px;color:#000;">Комментарий к триггеру:</div>
<div class="t" style="left:366.9px;top:185px;font-size:13.5px;letter-spacing:0.553px;color:#000;">Функции триггера:</div>
<div class="t" style="left:1316.3px;top:560px;font-size:13px;letter-spacing:0.609px;color:#fff;">RU</div>
<div class="t" style="left:1310.1px;top:711px;font-size:14px;letter-spacing:-0.049px;color:#fff;">19:53</div>
<div class="t" style="left:1293.1px;top:733px;font-size:14px;letter-spacing:0.052px;color:#fff;">19.07.2016</div>
<div class="tb" style="left:10px"><svg style="top:2px" width="16" height="16" viewBox="0 0 16 16" ><path d="M2.6 2.6H9.5L13.4 6.5V14.4H2.6Z" fill="#fff" stroke="#000" stroke-width="1.3"/><path d="M9.5 2.6V6.5H13.4" fill="none" stroke="#000" stroke-width="1.1"/></svg></div>
<div class="tb" style="left:34px"><svg style="top:3px" width="16" height="16" viewBox="0 0 16 16" ><path d="M1.5 13.5V5.5H3L4 4.5H7L8 5.5H11.5V8" fill="#f6f27a" stroke="#000" stroke-width="1"/><path d="M1.5 13.5L4.5 8.5H15L11.5 13.5Z" fill="#808000" stroke="#000" stroke-width="1"/><path d="M9 3.5C10.5 1.3 13 1.5 14 3.8" fill="none" stroke="#000" stroke-width="1.1"/><path d="M12.3 4.2H14.8V1.7Z" fill="#000"/></svg></div>
<div class="tb" style="left:58px"><svg style="top:2px" width="16" height="17" viewBox="0 0 16 17" ><g transform="translate(0,1)"><path d="M1.5 1.5H14.5V14.5H2.5L1.5 13.5Z" fill="#7e7e00" stroke="#000" stroke-width="1"/><rect x="4" y="1.5" width="8" height="6" fill="#c4c4c4" stroke="#303000" stroke-width=".6"/><rect x="4" y="9.5" width="8.5" height="5" fill="#000"/><rect x="9.6" y="10.6" width="1.8" height="3" fill="#c4c4c4"/></g></svg></div>
<div class="tb" style="left:90px"><svg style="top:2px" width="16" height="16" viewBox="0 0 16 16" ><path d="M5.6 2L9.4 11M10.4 2L6.6 11" stroke="#000" stroke-width="1.3" fill="none"/><ellipse cx="5.4" cy="13.2" rx="1.7" ry="2.2" fill="none" stroke="#00008a" stroke-width="1.1"/><ellipse cx="10.6" cy="13.2" rx="1.7" ry="2.2" fill="none" stroke="#00008a" stroke-width="1.1"/></svg></div>
<div class="tb" style="left:114px"><svg style="top:2px" width="16" height="16" viewBox="0 0 16 16" ><path d="M1.5 1.5H6L8.5 4V10.5H1.5Z" fill="#fff" stroke="#000" stroke-width="1"/><path d="M3 4.5H6M3 6.5H7M3 8.5H5" stroke="#000" stroke-width="1"/><path d="M6.5 5.5H11L14.5 8.5V14.5H6.5Z" fill="#fff" stroke="#00007a" stroke-width="1.2"/><path d="M11 5.5V8.5H14.5" fill="none" stroke="#00007a"/><path d="M8 10.5H13M8 12.5H13" stroke="#00007a" stroke-width="1"/></svg></div>
<div class="tb" style="left:138px"><svg style="top:3px" width="16" height="16" viewBox="0 0 16 16" ><path d="M2 4.5Q2 3 3.5 3H5.5Q6 1.5 8 1.5Q10 1.5 10.5 3H12Q13.5 3 13.5 4.5V7L15 8.5V13.5Q15 14.5 14 14.5H3.5Q2 14.5 2 13Z" fill="#a6a6a6"/></svg></div>
<div class="tb" style="left:170px"><svg style="top:3px" width="16" height="16" viewBox="0 0 16 16" ><path d="M4.5 8.5C5.5 4.5 11.5 4.2 12.3 8C12.8 10.8 10.3 11.8 8.6 11.6" fill="none" stroke="#b2b2b2" stroke-width="1.5"/><path d="M2 5.3L2.6 10.8L7.6 8.6Z" fill="#b2b2b2"/></svg></div>
<div class="tb" style="left:194px"><svg style="top:3px" width="16" height="16" viewBox="0 0 16 16" ><g transform="translate(16,0) scale(-1,1)"><path d="M4.5 8.5C5.5 4.5 11.5 4.2 12.3 8C12.8 10.8 10.3 11.8 8.6 11.6" fill="none" stroke="#b2b2b2" stroke-width="1.5"/><path d="M2 5.3L2.6 10.8L7.6 8.6Z" fill="#b2b2b2"/></g></svg></div>
<div class="tb" style="left:226px"><svg style="top:2px" width="16" height="16" viewBox="0 0 16 16" ><path d="M2 2.4H6.4L8 5.6L9.6 2.4H14L10.2 8.6L14.6 15.4H9.8L8 11.8L6.2 15.4H1.4L5.8 8.6Z" fill="#e6c21c" stroke="#000" stroke-width="1.5" stroke-linejoin="round"/><path d="M3.6 3.6H5.6L7.4 6.2" stroke="#fff4a0" stroke-width=".8" fill="none"/></svg></div>
<div class="tb" style="left:258px"><svg style="top:2px" width="16" height="16" viewBox="0 0 16 16" ><path d="M0.8 13.5V3.5L2 2.5H6.5L8 4.5H13.5V13.5Z" fill="#faf4a4" stroke="#b8b060" stroke-width="1"/><path d="M1.4 14.3H14.3V5.5" fill="none" stroke="#6a6a40" stroke-width="1"/></svg></div>
<div class="tb" style="left:282px"><svg style="top:2px" width="16" height="17" viewBox="0 0 16 17" ><path d="M3 2H9.5L13.5 6V15.6H3Z" fill="#fff" stroke="#000" stroke-width="2"/><path d="M9.3 2V6.2H13.5" fill="none" stroke="#000" stroke-width="1.6"/></svg></div>
<div class="tb" style="left:306px"><svg style="top:2px" width="16" height="16" viewBox="0 0 16 16" ><rect x="2.5" y="2.5" width="12" height="2.6" fill="#c9a93a" stroke="#1a1400" stroke-width="1"/><rect x="3.8" y="5.6" width="10.7" height="2" fill="#c9a93a" stroke="#1a1400" stroke-width="1"/><rect x="2.5" y="9.4" width="12" height="2.6" fill="#c9a93a" stroke="#1a1400" stroke-width="1"/><rect x="3.8" y="12.5" width="10.7" height="2" fill="#c9a93a" stroke="#1a1400" stroke-width="1"/></svg></div>
<div class="tb" style="left:338px"><svg style="top:3px" width="16" height="16" viewBox="0 0 16 16" ><path d="M2.2 0.8V15.6" stroke="#111" stroke-width="1.5"/><path d="M3.1 1V15.4" stroke="#8e8e8e" stroke-width=".7"/><path d="M3.5 1.3L14.8 4.4L8.6 6.6L3.5 10.6Z" fill="#e4161a" stroke="#8a0a0a" stroke-width=".7"/><path d="M4 2.6L10 4.2" stroke="#ff6e6e" stroke-width=".8"/></svg></div>
<div class="tb" style="left:362px"><svg style="top:3px" width="16" height="16" viewBox="0 0 16 16" ><path d="M3.5 1.5H9.5L14 6V14.5H3.5Z" fill="#fff" stroke="#000" stroke-width="1.3"/><path d="M9.5 1.5V6H14" fill="none" stroke="#000" stroke-width="1.1"/><path d="M1.2 9H6.6V7L11.6 11L6.6 15V13H1.2Z" fill="#22c322" stroke="#0a3a0a" stroke-width="1"/></svg></div>
<div class="tb" style="left:386px"><svg style="top:2px" width="16" height="16" viewBox="0 0 16 16" ><rect x="1" y="8" width="14" height="7.5" fill="#3a3a3a" stroke="#000" stroke-width="1"/><path d="M2 10.5H14M2 12.8H14" stroke="#666" stroke-width=".9"/><path d="M1 7.6L11.5 1.2L13 3.4L2.6 8.6Z" fill="#d8d8d8" stroke="#000" stroke-width="1"/><path d="M4 5.7l1.6 2M7 4l1.6 2M10 2.2l1.6 2" stroke="#000" stroke-width="1.2"/></svg></div>
<div class="tb" style="left:418px"><svg style="top:2px" width="16" height="16" viewBox="0 0 16 16" ><path d="M0.3 12.2L8 4.6L15.7 12.2L13.5 14H2.5Z" fill="#54382a" stroke="#1a0e06" stroke-width=".9"/><path d="M8 5.4L5 8.6L7 8L8.4 9.6L9.8 8.2L11.4 9Z" fill="#f0ece4"/><path d="M3 11.6L6 10.2L8 12L10.5 10.6L13.2 11.8" stroke="#c0a080" stroke-width="1.1" fill="none"/></svg></div>
<div class="tb dn" style="left:442px"><svg style="top:2px" width="16" height="18" viewBox="0 0 16 18" ><g transform="translate(8,15.2) scale(1,1.08)"><text x="0" y="0" text-anchor="middle" font-family="Liberation Serif" font-weight="bold" font-size="23" fill="#cfa51a" stroke="#5a4606" stroke-width=".8">a</text></g></svg></div>
<div class="tb" style="left:466px"><svg style="top:3px" width="16" height="16" viewBox="0 0 16 16" ><path d="M1.8 6H4.8L8.8 2.2V13.8L4.8 10H1.8Z" fill="#f2d84a" stroke="#b89a18" stroke-width=".9"/><path d="M10.5 5.5L14.5 3M10.8 8H15M10.5 10.5L14.5 13M10.3 4L12.5 1.6M10.3 12L12.5 14.4" stroke="#a8a8a8" stroke-width=".9"/></svg></div>
<div class="tb" style="left:490px"><svg style="top:2px" width="16" height="17" viewBox="0 0 16 17" ><path d="M2.5 14V5.5Q2.5 1 8 1Q13.5 1 13.5 5.5V14L12 16H10.5L9.5 14.5H6.5L5.5 16H4Z" fill="#4e525a" stroke="#08080c" stroke-width="1.1" stroke-linejoin="round"/><path d="M4 5Q4.4 2.2 8 2.2Q10.5 2.2 11.6 3.6Q8 2.8 4 5Z" fill="#c4c8d0"/><path d="M5.2 6Q8 4.6 10.8 6" fill="none" stroke="#ddd6a6" stroke-width="1.1"/><path d="M5.4 6.5V14M7.3 6V13.5M8.9 6V13.5M10.8 6.5V14" stroke="#d8d0a0" stroke-width=".95"/><path d="M6.4 7V13M8.1 6.5V14.5M9.9 7V13" stroke="#15151a" stroke-width=".8"/></svg></div>
<div class="tb" style="left:514px"><svg style="top:3px" width="16" height="16" viewBox="0 0 16 16" ><path d="M1.3 10.2L3.6 4.6H12.4L14.7 10.2Z" fill="#e9dfcc" stroke="#120a06" stroke-width="1"/><path d="M8 4.6V10.2" stroke="#5a4030" stroke-width=".8"/><ellipse cx="5.6" cy="7.4" rx="1.4" ry="1.7" fill="#a2482c"/><ellipse cx="10.4" cy="7.4" rx="1.4" ry="1.7" fill="#a2482c"/><path d="M1 11.4H15" stroke="#0c0604" stroke-width="2.2"/><path d="M4.5 11H11.5" stroke="#9a8468" stroke-width=".7"/></svg></div>
<div class="tb" style="left:538px"><svg style="top:3px" width="16" height="16" viewBox="0 0 16 16" ><rect width="16" height="16" fill="#000"/><rect x="1" y="1" width="14" height="14" fill="#073807"/><path d="M3 2.2Q8 0.8 13 2.2L12.4 4Q10 4.6 9.2 6.6H6.8Q6 4.6 3.6 4Z" fill="#18b418"/><path d="M3.2 6.4Q4.6 5.2 6 7L6.8 8.2H9.2L10 7Q11.4 5.2 12.8 6.4L12 10.6Q8 12.6 4 10.6Z" fill="#129212"/><path d="M4.6 7.4L6.8 8.6M11.4 7.4L9.2 8.6" stroke="#052805" stroke-width="1"/><path d="M5.4 11.2Q8 8.8 10.6 11.2" fill="none" stroke="#063006" stroke-width="1.3"/><path d="M1.6 13.6H14.4" stroke="#22d222" stroke-width="1.7" stroke-dasharray="1.6 .7"/></svg></div>
<div class="tb" style="left:562px"><svg style="top:2px" width="16" height="16" viewBox="0 0 16 16" ><path d="M0.5 9.5L4.5 14L6 9Z" fill="#8a8a8a" opacity=".7"/><path d="M3.5 4.5L10.5 1.5L15 4.5L8.5 8Z" fill="#c6c4ba" stroke="#55554e" stroke-width=".6"/><path d="M3.5 4.5L8.5 8V15.5L3.5 11Z" fill="#5e5e58" stroke="#3a3a36" stroke-width=".6"/><path d="M8.5 8L15 4.5V11.5L8.5 15.5Z" fill="#908f86" stroke="#55554e" stroke-width=".6"/></svg></div>
<div class="tb" style="left:586px"><svg style="top:2px" width="16" height="16" viewBox="0 0 16 16" ><path d="M1.5 1.5H7.5V12.5H1.5Z" fill="#fff" stroke="#000" stroke-width="1"/><path d="M4.5 3.5H10L13.5 7V14.5H4.5Z" fill="#fff" stroke="#000" stroke-width="1.1"/><path d="M10 3.5V7H13.5" fill="none" stroke="#000" stroke-width="1"/><path d="M15.3 9.6H11.6V7.6L7.6 10.8L11.6 14V12H15.3Z" fill="#22c322" stroke="#0a4a0a" stroke-width=".8"/></svg></div>
<div class="tb" style="left:618px"><svg style="top:2px" width="16" height="16" viewBox="0 0 16 16" ><rect x="1" y="3" width="12.5" height="12" fill="#2a2014" stroke="#c8a83a" stroke-width="1.4"/><path d="M3.5 8.5L6.5 12L14.5 2.5" fill="none" stroke="#d03418" stroke-width="2.6"/></svg></div>
<!-- ===== scrollbars ===== -->
<style>
.vtrack{background:linear-gradient(90deg,#e9e9e9,#f3f3f3 30%,#f3f3f3)}
.vthumb{border:1px solid #8e8e8e;border-radius:2px;background:linear-gradient(90deg,#f5f5f5 0,#e9e9eb 42%,#d9d9dd 43%,#c6c6ca 88%,#dedee0 100%);box-shadow:inset 0 0 0 1px rgba(255,255,255,.55)}
.hthumb{border:1px solid #8e8e8e;border-radius:2px;background:linear-gradient(180deg,#f5f5f5 0,#e9e9eb 42%,#d6d6da 43%,#cacace 80%,#dedee0 100%);box-shadow:inset 0 0 0 1px rgba(255,255,255,.55)}
</style>
<div class="a vtrack" style="left:336px;top:99px;width:20px;height:659px"></div>
<div class="a vthumb" style="left:336px;top:295px;width:19px;height:228px"></div>
<svg class="a" style="left:340px;top:403px" width="11" height="12" viewBox="0 0 11 12"><path d="M1 1.5H10M1 5.5H10M1 9.5H10" stroke="#4a4a4a" stroke-width="1"/><path d="M1 2.5H10M1 6.5H10M1 10.5H10" stroke="#fff" stroke-width="1"/></svg>
<svg class="a" style="left:340px;top:105px" width="11" height="8" viewBox="0 0 11 8"><path d="M1 6.5L5.5 1.8L10 6.5Z" fill="#505050"/></svg>
<svg class="a" style="left:340px;top:743px" width="11" height="8" viewBox="0 0 11 8"><path d="M1 1.8L5.5 6.8L10 1.8Z" fill="#505050"/></svg>
<!-- horizontal scrollbar -->
<div class="a" style="left:368px;top:738px;width:905px;height:20px;background:linear-gradient(180deg,#e9e9e9,#f3f3f3 30%,#f3f3f3)"></div>
<div class="a hthumb" style="left:390px;top:738px;width:827px;height:19px"></div>
<svg class="a" style="left:796px;top:742px" width="12" height="11" viewBox="0 0 12 11"><path d="M1.5 1V10M5.5 1V10M9.5 1V10" stroke="#4a4a4a" stroke-width="1"/><path d="M2.5 1V10M6.5 1V10M10.5 1V10" stroke="#fff" stroke-width="1"/></svg>
<svg class="a" style="left:374px;top:742px" width="8" height="11" viewBox="0 0 8 11"><path d="M6.3 1L1.3 5.5L6.3 10Z" fill="#505050"/></svg>
<svg class="a" style="left:1259px;top:742px" width="8" height="11" viewBox="0 0 8 11"><path d="M1.7 1L6.7 5.5L1.7 10Z" fill="#505050"/></svg>

<!-- ===== title icon ===== -->
<svg class="a" style="left:9px;top:11px" width="21" height="22" viewBox="0 0 21 22">
 <path d="M1 3.5Q1 1.5 3.5 2H15.5L14.5 15.5H19.5Q20.5 17.5 19 20H5.5Q4 20 4 17.5L4.5 6H3Q1 6 1 3.5Z" fill="#b8946a" stroke="#2a1a0c" stroke-width="1.5" stroke-linejoin="round"/>
 <path d="M6 5.5L12.5 5M6 9H12M6 12.5H11.5M6.5 16H17" stroke="#8a6a44" stroke-width="1.2"/>
 <path d="M6 17L17.5 2.5L20 1" stroke="#4a3a2a" stroke-width="2.2" fill="none"/><path d="M7 16L18 2.5" stroke="#e8e4dc" stroke-width="1.1" fill="none"/>
</svg>

<!-- ===== caption buttons ===== -->
<div class="a" style="left:1137px;top:3px;width:138px;height:27px;border:1px solid #4b5563;border-top:none;border-radius:0 0 6px 6px;overflow:hidden;box-shadow:0 0 0 1px rgba(255,255,255,.55)">
 <div class="a" style="left:0;top:0;width:37px;height:26px;background:linear-gradient(180deg,#c6d5e6 0,#b3c6dc 45%,#97afc9 50%,#adc3da 100%);border-right:1px solid #4b5563;box-shadow:inset 0 0 0 1px rgba(255,255,255,.5)"></div>
 <div class="a" style="left:38px;top:0;width:36px;height:26px;background:linear-gradient(180deg,#c6d5e6 0,#b3c6dc 45%,#97afc9 50%,#adc3da 100%);border-right:1px solid #4b5563;box-shadow:inset 0 0 0 1px rgba(255,255,255,.5)"></div>
 <div class="a" style="left:74px;top:0;width:63px;height:26px;background:linear-gradient(180deg,#e6a596 0,#d7796a 45%,#c6452c 50%,#d65a3a 85%,#e08a6a 100%);box-shadow:inset 0 0 0 1px rgba(255,255,255,.4)"></div>
</div>
<!-- glyphs -->
<div class="a" style="left:1147px;top:19px;width:18px;height:6px;background:#fff;border:1px solid #4a4e56;border-radius:1px"></div>
<div class="a" style="left:1183px;top:9px;width:20px;height:16px;background:#fff;border:1px solid #4a4e56;border-radius:1px"></div>
<div class="a" style="left:1188px;top:14px;width:10px;height:7px;background:#b5c8de;border:1px solid #4a4e56"></div>
<svg class="a" style="left:1232px;top:8px" width="22" height="18" viewBox="0 0 22 18"><path d="M2 1.5H7.5L11 5.5L14.5 1.5H20L14 9L20.5 16.5H14.8L11 12.3L7.2 16.5H1.5L8 9Z" fill="#fff" stroke="#4a3a3a" stroke-width="1.2" stroke-linejoin="round"/></svg>

<!-- ===== taskbar contents ===== -->
<!-- start orb -->
<svg class="a" style="left:1304px;top:11px" width="46" height="46" viewBox="0 0 46 46">
 <defs>
  <radialGradient id="og" cx="50%" cy="85%" r="75%"><stop offset="0" stop-color="#36d0f4"/><stop offset=".45" stop-color="#1878b8"/><stop offset="1" stop-color="#0c3c70"/></radialGradient>
  <linearGradient id="oh" x1="0" y1="0" x2="0" y2="1"><stop offset="0" stop-color="#fff" stop-opacity=".75"/><stop offset="1" stop-color="#fff" stop-opacity=".1"/></linearGradient>
 </defs>
 <circle cx="23" cy="23" r="21.5" fill="url(#og)" stroke="#1c4a78" stroke-width="1.2"/>
 <path d="M3 20A20.3 20.3 0 0 1 43 20Q23 27 3 20Z" fill="url(#oh)"/>
 <path d="M11.2 12.6Q16.5 9 21.6 11.6L19.4 21.4Q14.2 19 9 22.4Z" fill="#f0642a"/>
 <path d="M23.6 12.2Q28.6 15 34.6 11.4L32.4 21.2Q26.6 24.6 21.4 22Z" fill="#8cc43c"/>
 <path d="M8.4 24.6Q13.6 21.2 18.8 23.6L16.6 33.4Q11.4 31 6.2 34.4Z" fill="#3a9ae0"/>
 <path d="M20.8 24.2Q26 27 31.8 23.4L29.6 33.2Q23.8 36.6 18.6 34Z" fill="#f8c82a"/>
 <path d="M3.5 23A19.8 19.8 0 0 1 42.5 23Q23 14 3.5 23Z" fill="#fff" opacity=".16"/>
</svg>
<!-- grips -->
<div class="a grip" style="left:1295px;top:74px"></div>
<div class="a grip" style="left:1295px;top:537px"></div>
<style>
.grip{width:66px;height:10px;background:
 linear-gradient(#2a3442,#2a3442) 0 0/7px 4px,
 linear-gradient(#d8e2ee,#d8e2ee) 0 0/7px 4px;background-image:
 radial-gradient(circle at 1px 1px,#2a3442 0,#2a3442 .75px,transparent 1.05px),
 radial-gradient(circle at 2px 2px,#d8e2ee 0,#d8e2ee .6px,transparent 1px);background-size:7px 4px;background-position:0 0}
</style>
<!-- explorer icon -->
<svg class="a" style="left:1307px;top:99px" width="42" height="42" viewBox="0 0 42 42">
 <defs><linearGradient id="fg" x1="0" y1="0" x2="0" y2="1"><stop offset="0" stop-color="#f9e9a4"/><stop offset="1" stop-color="#edd06c"/></linearGradient></defs>
 <path d="M2 6Q2 3 5 3H17L19 1.5H24Q26 1.5 26 4V30H2Z" fill="#f1d787" stroke="#d0b050" stroke-width=".8"/>
 <rect x="4.5" y="3.5" width="12" height="3.6" fill="#fdfdf6"/><rect x="5" y="3.8" width="2.4" height="3" fill="#3a9a3c"/>
 <path d="M13 9Q13 6 16 6H26L28 4.5H33Q35 4.5 35 7V30H13Z" fill="#f1d787" stroke="#d0b050" stroke-width=".8"/>
 <rect x="15.5" y="6.3" width="11" height="3.6" fill="#fdfdf6"/><rect x="16" y="6.6" width="2.4" height="3" fill="#d23a2a"/>
 <path d="M24 11Q24 8.4 27 8.4H38Q40 8.4 40 10.5V30H24Z" fill="#f1d787" stroke="#d0b050" stroke-width=".8"/>
 <rect x="27" y="8.8" width="10.5" height="3.6" fill="#fdfdf6"/><rect x="27.5" y="9.2" width="2.4" height="3" fill="#2a6ec0"/>
 <path d="M2 10H24L26 12.6H40V34.5Q40 36.5 38 36.5H4Q2 36.5 2 34.5Z" fill="url(#fg)" stroke="#d8ba5c" stroke-width=".8"/>
 <path d="M6.5 26.5Q6.5 24.5 8.5 24.5H33.5Q35.5 24.5 35.5 26.5V39.5H27V33.5H15V39.5H6.5Z" fill="#6cb8e0" stroke="#4a9ccc" stroke-width=".9"/>
 <path d="M7.5 27Q7.5 25.5 9 25.5H33Q34.5 25.5 34.5 27V30.5H7.5Z" fill="#bfe6f6" opacity=".85"/>
</svg>
<!-- opera button -->
<div class="a" style="left:1289px;top:149px;width:77px;height:53px;border:1px solid #4e5d70;border-right:none;border-radius:3px 0 0 3px;background:linear-gradient(135deg,#c9d8e9 0,#b4c6db 50%,#bccddf 100%);box-shadow:inset 1px 1px 0 rgba(255,255,255,.7)"></div>
<svg class="a" style="left:1306px;top:156px" width="42" height="40" viewBox="0 0 42 40">
 <defs><linearGradient id="opg" x1="0" y1="0" x2="1" y2="1"><stop offset="0" stop-color="#ff4a4e"/><stop offset=".6" stop-color="#e81224"/><stop offset="1" stop-color="#b80c1c"/></linearGradient></defs>
 <path fill-rule="evenodd" d="M21 1A19.5 19 0 1 0 21 39A19.5 19 0 1 0 21 1ZM21 6.5C27 6.5 29.5 13 29.5 20C29.5 27 27 33.5 21 33.5C15 33.5 12.5 27 12.5 20C12.5 13 15 6.5 21 6.5Z" fill="url(#opg)"/>
</svg>
<!-- editor button (active) -->
<div class="a" style="left:1290px;top:206px;width:71px;height:53px;border:1px solid #5a6a7e;border-radius:3px;background:linear-gradient(135deg,#dfe9f4 0,#c9d9ea 50%,#d6e3f0 100%);box-shadow:inset 0 0 0 1px rgba(255,255,255,.8)"></div>
<div class="a" style="left:1361px;top:206px;width:6px;height:53px;border:1px solid #5a6a7e;border-radius:3px 0 0 3px;background:#cfdded;box-shadow:inset 1px 1px 0 rgba(255,255,255,.8)"></div>
<svg class="a" style="left:1303px;top:211px" width="42" height="42" viewBox="0 0 42 42">
 <path d="M2 8Q1 13 5.5 13L6.5 12.5L7.5 34Q8 38 11 39.5H37Q41 37.5 39.5 33L38 32H30.5L31.5 7.5Q27 5.5 6 6.5Q2.5 6 2 8Z" fill="#b48e62" stroke="#1c1008" stroke-width="1.7" stroke-linejoin="round"/>
 <path d="M3 8Q2.6 11.6 5.6 11.6L6.4 8Z" fill="#6a6460"/>
 <path d="M9 9H29L28.6 15L20 20L12 18L9.4 14Z" fill="#c09a6c" opacity=".7"/>
 <path d="M10 22Q14 19 18 22L22 20L27 23L29 29L24 31L20 28L14 31L10 28Z" fill="#5e432a" opacity=".55"/>
 <path d="M20 14L26 12L28 19L23 21Z" fill="#6e5030" opacity=".45"/>
 <path d="M11 24H16M12 28H18M20 25H25M22 29H27M13 20H17" stroke="#3e2a18" stroke-width="1.3" opacity=".7"/>
 <path d="M10.5 36.6Q30 36 38.6 34.4" stroke="#d8b484" stroke-width="2.2" fill="none"/>
 <path d="M12 39Q30 39 38 36.8" stroke="#2a1a0e" stroke-width="1.4" fill="none"/>
 <path d="M12.5 33.5L19 24.5" stroke="#2a1c10" stroke-width="1.6"/>
 <path d="M17.5 23.5L24 12Q30 4.5 40 2.5Q35.5 6.5 33 12Q28.5 18.5 20 24Z" fill="#b9bcbe" stroke="#54585c" stroke-width=".9"/>
 <path d="M19 22.5L31 8" stroke="#eceeee" stroke-width="1.3"/><path d="M33 5Q37 2.6 40 2.5" stroke="#4a4e52" stroke-width="1.2" fill="none"/>
</svg>
<!-- tray arrow -->
<svg class="a" style="left:1302px;top:596px" width="8" height="11" viewBox="0 0 8 11"><path d="M7 0.5L0.8 5.5L7 10.5Z" fill="#fff" stroke="#7a8898" stroke-width=".6"/></svg>
<!-- avast -->
<svg class="a" style="left:1296px;top:621px" width="22" height="22" viewBox="0 0 22 22"><circle cx="11" cy="11" r="10" fill="#f79a1e"/><path d="M15.6 13.6A5.2 5.2 0 1 0 11.4 16.2" fill="none" stroke="#fff" stroke-width="2.6" stroke-linecap="round"/><circle cx="15.2" cy="14.8" r="1.6" fill="#fff"/></svg>
<!-- speaker -->
<svg class="a" style="left:1326px;top:621px" width="22" height="22" viewBox="0 0 22 22"><path d="M1.5 7H5L10 1.5V19.5L5 14H1.5Z" fill="#fff" stroke="#6a7686" stroke-width=".8"/><path d="M12 8Q13.5 10.5 12 13" fill="none" stroke="#fff" stroke-width="1.3"/><path d="M14.5 6Q17.5 10.5 14.5 15M17 4Q21.5 10.5 17 17" fill="none" stroke="#e4ecf4" stroke-width="1.3"/></svg>
<!-- flag -->
<svg class="a" style="left:1297px;top:652px" width="22" height="20" viewBox="0 0 22 20"><path d="M2 0.5V19.5" stroke="#fff" stroke-width="1.8"/><path d="M3.5 2Q8 0.5 12 3V7Q15 8.5 19.5 6.5Q18 11 13 11.5Q8 9 3.5 11Z" fill="#fff" stroke="#6a7686" stroke-width=".7"/></svg>
<!-- battery -->
<svg class="a" style="left:1326px;top:652px" width="22" height="20" viewBox="0 0 22 20"><rect x="4" y="0.5" width="5" height="2" fill="#5a6470"/><rect x="1.5" y="2" width="10" height="16.5" rx="1" fill="#5c6874" stroke="#2e3640" stroke-width="1"/><rect x="3" y="4" width="7" height="8" fill="#6f7a86"/><path d="M1.5 10L9.5 18M9.5 10L1.5 18" stroke="#e0141c" stroke-width="2.4"/><path d="M14 1V5M18 1V5" stroke="#fff" stroke-width="1.6"/><rect x="12.5" y="5" width="7" height="4.5" rx="1" fill="#fff"/><rect x="14.5" y="9" width="3" height="10" fill="#fff"/></svg>
<!-- network -->
<svg class="a" style="left:1296px;top:681px" width="22" height="21" viewBox="0 0 22 21"><rect x="6.5" y="4.5" width="14" height="11" fill="#66727e" stroke="#fff" stroke-width="1.4"/><rect x="8" y="6" width="11" height="8" fill="#7e8a96"/><rect x="9" y="17" width="9" height="2.4" fill="#fff"/><rect x="12" y="15" width="3" height="3" fill="#fff"/><rect x="1.5" y="1.5" width="5.5" height="8" rx="1" fill="#6a7682" stroke="#fff" stroke-width="1.3"/><path d="M4.2 9V20" stroke="#fff" stroke-width="1.8"/></svg>
<!-- cloud -->
<svg class="a" style="left:1326px;top:681px" width="23" height="21" viewBox="0 0 23 21"><path d="M4 14Q0.5 13 2 9.5Q3.5 7.5 6 8Q7 2.5 12 2Q17 2 18.5 7Q22 7.5 21.5 11Q21 13.5 18 14Z" fill="#fff" stroke="#5a6674" stroke-width=".8"/><path d="M4 11Q9 5.5 17 7.5" stroke="#7e8a98" stroke-width="1.4" fill="none"/><circle cx="15.5" cy="14.5" r="5.6" fill="#22a83a" stroke="#0e6a20" stroke-width=".6"/><path d="M12.6 14.4L14.8 16.8L18.6 12" fill="none" stroke="#fff" stroke-width="1.6"/></svg>
<!-- show desktop -->
<div class="a" style="left:1289px;top:753px;width:77px;height:15px;border:1px solid #5e6c7e;border-right:none;background:linear-gradient(180deg,#a9b9cb,#8d9db2);box-shadow:inset 1px 1px 0 rgba(255,255,255,.5)"></div>
</body></html>
